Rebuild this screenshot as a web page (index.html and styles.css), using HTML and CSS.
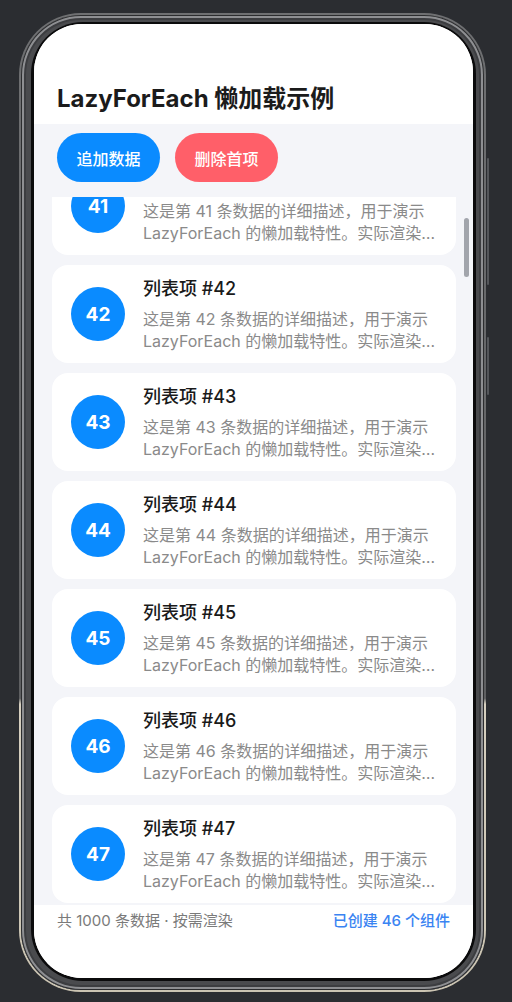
FILE: index.html
```html
<!DOCTYPE html>
<html lang="zh-CN">
<head>
<meta charset="utf-8">
<title>LazyForEach 懒加载示例</title>
<link rel="stylesheet" href="styles.css">
</head>
<body>
<div class="device">
  <span class="side-key key-a"></span>
  <span class="side-key key-b"></span>
  <div class="frame-outer">
    <div class="frame-band">
      <div class="frame-inner">
        <div class="screen">
          <header class="header">
            <h1 class="title">LazyForEach 懒加载示例</h1>
          </header>
          <div class="toolbar">
            <button class="btn btn-primary">追加数据</button>
            <button class="btn btn-danger">删除首项</button>
          </div>
          <div class="list">
            <div class="list-content">
              <div class="card"><div class="avatar">41</div><div class="info"><div class="item-title">列表项 #41</div><div class="item-desc">这是第 41 条数据的详细描述，用于演示 LazyForEach 的懒加载特性。实际渲染时只会创建可见区域内的组件。</div></div></div>
              <div class="card"><div class="avatar">42</div><div class="info"><div class="item-title">列表项 #42</div><div class="item-desc">这是第 42 条数据的详细描述，用于演示 LazyForEach 的懒加载特性。实际渲染时只会创建可见区域内的组件。</div></div></div>
              <div class="card"><div class="avatar">43</div><div class="info"><div class="item-title">列表项 #43</div><div class="item-desc">这是第 43 条数据的详细描述，用于演示 LazyForEach 的懒加载特性。实际渲染时只会创建可见区域内的组件。</div></div></div>
              <div class="card"><div class="avatar">44</div><div class="info"><div class="item-title">列表项 #44</div><div class="item-desc">这是第 44 条数据的详细描述，用于演示 LazyForEach 的懒加载特性。实际渲染时只会创建可见区域内的组件。</div></div></div>
              <div class="card"><div class="avatar">45</div><div class="info"><div class="item-title">列表项 #45</div><div class="item-desc">这是第 45 条数据的详细描述，用于演示 LazyForEach 的懒加载特性。实际渲染时只会创建可见区域内的组件。</div></div></div>
              <div class="card"><div class="avatar">46</div><div class="info"><div class="item-title">列表项 #46</div><div class="item-desc">这是第 46 条数据的详细描述，用于演示 LazyForEach 的懒加载特性。实际渲染时只会创建可见区域内的组件。</div></div></div>
              <div class="card"><div class="avatar">47</div><div class="info"><div class="item-title">列表项 #47</div><div class="item-desc">这是第 47 条数据的详细描述，用于演示 LazyForEach 的懒加载特性。实际渲染时只会创建可见区域内的组件。</div></div></div>
            </div>
            <span class="scrollbar"></span>
          </div>
          <footer class="footer">
            <span class="footer-left">共 1000 条数据 · 按需渲染</span>
            <span class="footer-right">已创建 46 个组件</span>
          </footer>
        </div>
      </div>
    </div>
  </div>
</div>
</body>
</html>
```
FILE: styles.css
```css
* { box-sizing: border-box; }
html, body {
  margin: 0;
  height: 1002px;
  overflow: hidden;
  background: #2b2d31;
}
body {
  font-family: "Inter", "Noto Sans CJK SC", sans-serif;
}
.device {
  position: relative;
  width: 467px;
  height: 979px;
  margin: 13px 0 0 19px;
}
.frame-outer {
  height: 100%;
  padding: 2px;
  border-radius: 62px;
  background: linear-gradient(180deg, #6f7072 0%, #5e5f61 70%, #d6cfbf 70.6%, #cbc4b2 100%);
}
.frame-band {
  height: 100%;
  padding: 7px 8px 9px 10px;
  border-radius: 60px;
  background: #4a4b4e;
  box-shadow: inset 0 0 0 1px #2c2d2f, inset 0 0 0 3px #8e8f92, inset 0 0 0 5px #3c3d40;
}
.frame-inner {
  height: 100%;
  padding: 2px 3px 3px 3px;
  border-radius: 52px;
  background: #0b0b0c;
}
.screen {
  height: 100%;
  border-radius: 48px;
  overflow: hidden;
  background: #ffffff;
  display: flex;
  flex-direction: column;
}
.side-key {
  position: absolute;
  right: -3px;
  width: 2px;
  border-radius: 1px;
  background: #55575b;
}
.key-a { top: 145px; height: 127px; }
.key-b { top: 324px; height: 58px; }

.header {
  height: 100px;
  flex: none;
  padding: 59px 0 0 23px;
  background: #ffffff;
}
.title {
  margin: 0;
  font-size: 24px;
  line-height: 32px;
  font-weight: 700;
  color: #1b1b1b;
}
.toolbar {
  height: 73px;
  flex: none;
  display: flex;
  gap: 15px;
  padding: 9px 0 0 23px;
  background: #f4f5f9;
}
.btn {
  width: 103px;
  height: 49px;
  border: 0;
  border-radius: 25px;
  font-family: "Inter", "Noto Sans CJK SC", sans-serif;
  font-size: 16px;
  font-weight: 500;
  color: #ffffff;
}
.btn-primary { background: #0a8bff; }
.btn-danger { background: #ff5f69; }

.list {
  position: relative;
  height: 708px;
  flex: none;
  overflow: hidden;
  background: #f4f5f9;
}
.list-content {
  display: flex;
  flex-direction: column;
  gap: 10px;
  margin-top: -40px;
  padding: 0 17px 0 18px;
}
.card {
  height: 98px;
  flex: none;
  display: flex;
  align-items: center;
  gap: 18px;
  padding: 0 16px 0 19px;
  border-radius: 16px;
  background: #ffffff;
}
.avatar {
  width: 54px;
  height: 54px;
  flex: none;
  border-radius: 50%;
  background: #0a8bff;
  color: #ffffff;
  font-size: 19px;
  font-weight: 700;
  display: flex;
  align-items: center;
  justify-content: center;
}
.info {
  flex: 1;
  min-width: 0;
}
.item-title {
  font-size: 18px;
  line-height: 24px;
  font-weight: 500;
  color: #1a1a1a;
}
.item-desc {
  margin-top: 7px;
  font-size: 16px;
  line-height: 22px;
  color: #8a8a8a;
  display: -webkit-box;
  -webkit-box-orient: vertical;
  -webkit-line-clamp: 2;
  overflow: hidden;
}
.scrollbar {
  position: absolute;
  top: 21px;
  right: 4px;
  width: 5px;
  height: 59px;
  border-radius: 3px;
  background: #a2a5ac;
}
.footer {
  flex: 1;
  display: flex;
  justify-content: space-between;
  padding: 6px 23px 0 23px;
  font-size: 15px;
  line-height: 20px;
  background: #ffffff;
}
.footer-left { color: #7a7a7a; }
.footer-right { color: #3a84f2; font-weight: 500; }
```
